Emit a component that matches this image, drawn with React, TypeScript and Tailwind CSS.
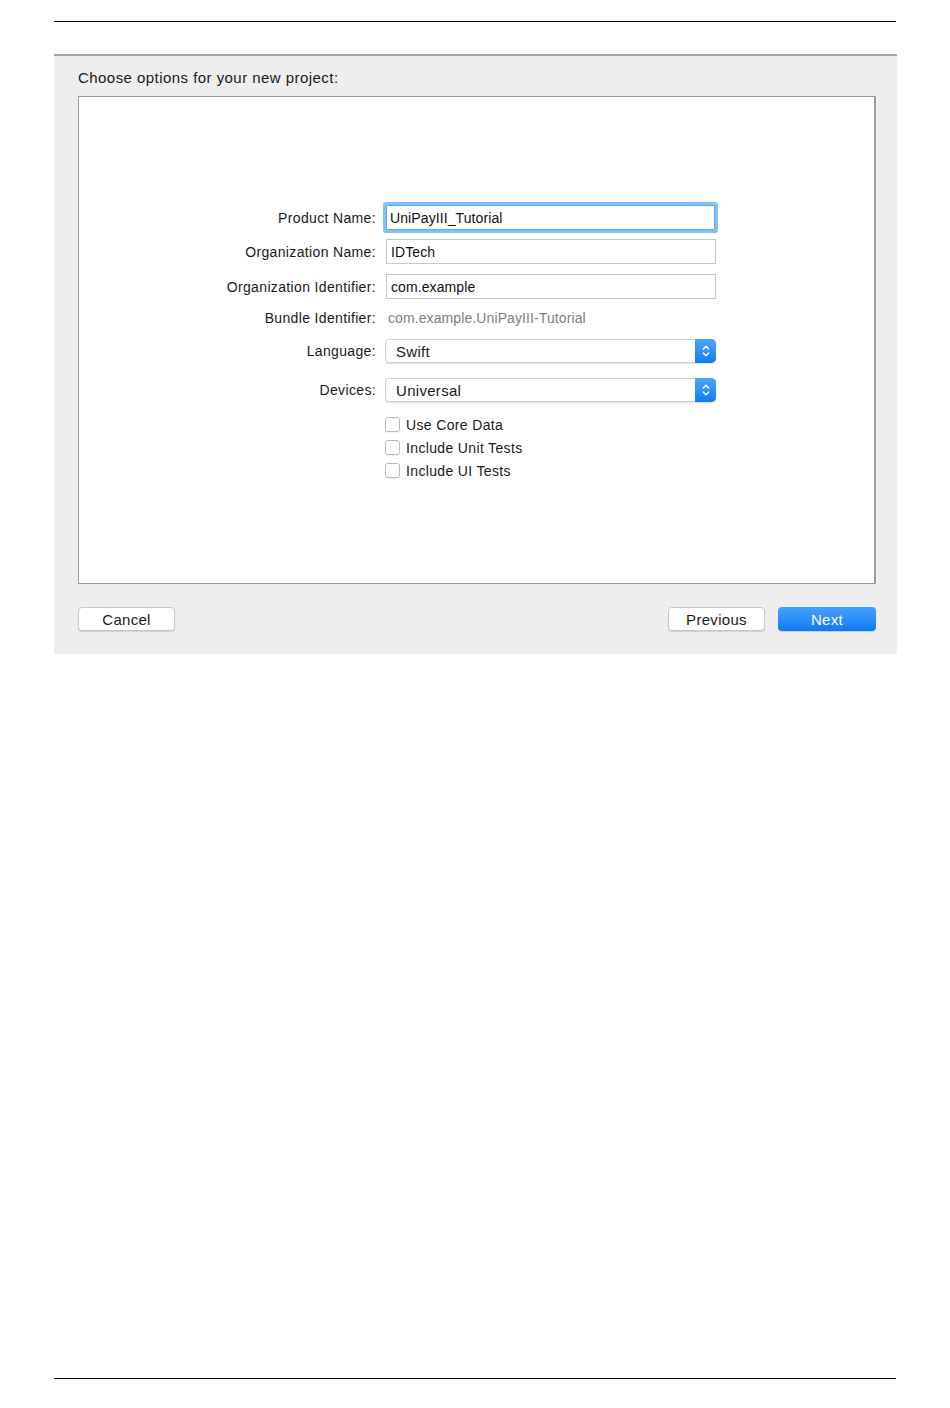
import React from "react";

const font = { fontFamily: '"Liberation Sans", Arial, sans-serif' };

function Label({ children }: { children: React.ReactNode }) {
  return (
    <div className="w-[297px] shrink-0 pr-0 text-right text-[14px] tracking-[0.35px] text-[#1a1a1a] leading-none">
      {children}
    </div>
  );
}

function Stepper() {
  return (
    <div className="flex h-[24px] w-[21px] -mr-px items-center justify-center rounded-r-[5px] bg-gradient-to-b from-[#4aa5fb] to-[#0b7cf6]">
      <svg width="10" height="16" viewBox="0 0 10 16" fill="none">
        <path d="M2.3 6 L5 3.3 L7.7 6" stroke="white" strokeWidth="1.4" strokeLinecap="round" strokeLinejoin="round" />
        <path d="M2.3 10 L5 12.7 L7.7 10" stroke="white" strokeWidth="1.4" strokeLinecap="round" strokeLinejoin="round" />
      </svg>
    </div>
  );
}

function Popup({ value }: { value: string }) {
  return (
    <div className="flex h-[24px] w-[331px] items-center rounded-[4px] border border-[#cfcfcf] bg-white shadow-[0_1px_1px_rgba(0,0,0,0.12)]">
      <div className="flex-1 pl-[10px] text-[15px] tracking-[0.3px] text-[#1a1a1a] leading-none">{value}</div>
      <Stepper />
    </div>
  );
}

function Check({ label }: { label: string }) {
  return (
    <div className="flex h-[23px] items-center">
      <div className="w-[297px] shrink-0" />
      <div className="ml-[9px] h-[15px] w-[15px] rounded-[3px] border border-[#b8b8b8] bg-white shadow-[0_1px_1px_rgba(0,0,0,0.06)]" />
      <div className="ml-[6px] text-[14px] tracking-[0.35px] text-[#1a1a1a] leading-none">{label}</div>
    </div>
  );
}

function Button({ children, primary, w }: { children: React.ReactNode; primary?: boolean; w: string }) {
  return (
    <div
      className={
        "flex h-[24px] items-center justify-center rounded-[4px] text-[15px] tracking-[0.3px] leading-none " +
        w +
        " " +
        (primary
          ? "bg-gradient-to-b from-[#45a2fa] to-[#0a79f5] text-white shadow-[0_1px_1px_rgba(0,0,0,0.15)]"
          : "border border-[#c8c8c8] bg-white text-[#1a1a1a] shadow-[0_1px_1px_rgba(0,0,0,0.12)]")
      }
    >
      {children}
    </div>
  );
}

export default function App() {
  return (
    <div className="min-h-[1408px] w-[950px] bg-white" style={font}>
      <div className="h-[21px]" />
      <div className="mx-[54px] h-px w-[842px] bg-black" />
      <div className="h-[32px]" />
      {/* dialog panel */}
      <div className="ml-[54px] flex h-[600px] w-[843px] flex-col border-t-2 border-[#a3a3a3] bg-[#eeeeee] pl-[24px] pr-[21px]">
        <div className="mt-[14px] h-[16px] text-[15px] tracking-[0.45px] leading-[16px] text-[#1a1a1a]">
          Choose options for your new project:
        </div>
        <div className="mt-[10px] flex h-[488px] w-[798px] flex-col border border-r-2 border-[#9c9c9c] bg-white">
          <div className="h-[108px]" />
          {/* Product name */}
          <div className="flex h-[25px] items-center">
            <Label>Product Name:</Label>
            <div className="ml-[10px] flex h-[25px] w-[329px] items-center rounded-[1px] border border-[#5ea8f0] bg-white pl-[3px] text-[14px] tracking-[0.1px] text-[#111] leading-none shadow-[0_0_0_3px_#84c0f8]">
              UniPayIII_Tutorial
            </div>
          </div>
          <div className="mt-[9px] flex h-[25px] items-center">
            <Label>Organization Name:</Label>
            <div className="ml-[10px] flex h-[25px] w-[330px] items-center border border-[#c6c6c6] bg-white pl-[4px] text-[14px] tracking-[0.1px] text-[#111] leading-none">
              IDTech
            </div>
          </div>
          <div className="mt-[10px] flex h-[25px] items-center">
            <Label>Organization Identifier:</Label>
            <div className="ml-[10px] flex h-[25px] w-[330px] items-center border border-[#c6c6c6] bg-white pl-[4px] text-[14px] tracking-[0.1px] text-[#111] leading-none">
              com.example
            </div>
          </div>
          <div className="mt-[9px] flex h-[20px] items-center">
            <Label>Bundle Identifier:</Label>
            <div className="ml-[12px] text-[14px] tracking-[0.1px] text-[#808080] leading-none">
              com.example.UniPayIII-Tutorial
            </div>
          </div>
          <div className="mt-[11px] flex h-[24px] items-center">
            <Label>Language:</Label>
            <div className="ml-[9px]">
              <Popup value="Swift" />
            </div>
          </div>
          <div className="mt-[15px] flex h-[24px] items-center">
            <Label>Devices:</Label>
            <div className="ml-[9px]">
              <Popup value="Universal" />
            </div>
          </div>
          <div className="mt-[11px] flex flex-col">
            <Check label="Use Core Data" />
            <Check label="Include Unit Tests" />
            <Check label="Include UI Tests" />
          </div>
        </div>
        <div className="mt-[23px] flex items-center">
          <Button w="w-[97px]">Cancel</Button>
          <div className="flex-1" />
          <Button w="w-[97px]">Previous</Button>
          <div className="w-[13px]" />
          <Button primary w="w-[98px]">Next</Button>
        </div>
      </div>
      <div className="h-[724px]" />
      <div className="mx-[54px] h-px w-[842px] bg-black" />
    </div>
  );
}
